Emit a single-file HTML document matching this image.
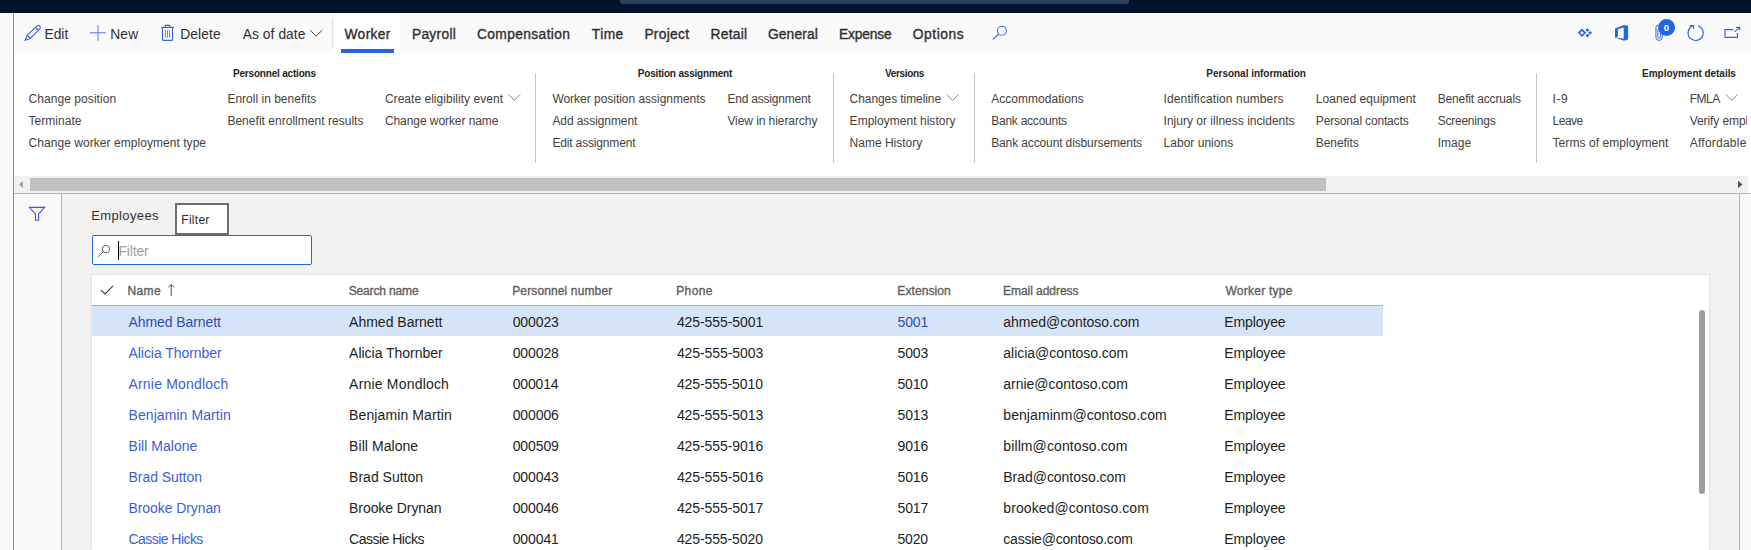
<!DOCTYPE html>
<html lang="en">
<head>
<meta charset="utf-8">
<title>Employees</title>
<style>
html,body{margin:0;padding:0}
body{width:1751px;height:550px;position:relative;overflow:hidden;background:#f3f2f1;font-family:"Liberation Sans",sans-serif}
.a{position:absolute}
.t{position:absolute;white-space:pre;line-height:20px;height:20px}
svg{position:absolute;overflow:visible}
</style>
</head>
<body>
<!-- top navigation bar -->
<div class="a" style="left:0;top:0;width:1751px;height:13px;background:#00142e"></div>
<div class="a" style="left:620px;top:0;width:509px;height:4px;background:#2b3f5f;border-radius:0 0 3px 3px"></div>
<!-- left strip -->
<div class="a" style="left:0;top:13px;width:13px;height:537px;background:#f8f8f8"></div>
<div class="a" style="left:13px;top:13px;width:1px;height:537px;background:#8f8f8f"></div>
<!-- action bar -->
<div class="a" style="left:14px;top:13px;width:1737px;height:40px;background:#fafafa"></div>
<div class="a" style="left:334px;top:13px;width:66px;height:40px;background:#ffffff"></div>
<div class="a" style="left:332px;top:18px;width:1px;height:30px;background:#e1dfdd"></div>
<div class="a" style="left:341px;top:49px;width:53px;height:4px;background:#2266e3"></div>
<!-- ribbon -->
<div class="a" style="left:14px;top:53px;width:1737px;height:123px;background:#ffffff"></div>
<div class="a" style="left:535px;top:73px;width:1px;height:90px;background:#c8c6c4"></div>
<div class="a" style="left:833px;top:73px;width:1px;height:90px;background:#c8c6c4"></div>
<div class="a" style="left:974px;top:73px;width:1px;height:90px;background:#c8c6c4"></div>
<div class="a" style="left:1536px;top:73px;width:1px;height:90px;background:#c8c6c4"></div>
<!-- horizontal scrollbar -->
<div class="a" style="left:14px;top:176px;width:1734px;height:17px;background:#f1f1f1"></div>
<div class="a" style="left:1748px;top:176px;width:3px;height:17px;background:#ffffff"></div>
<div class="a" style="left:30px;top:178px;width:1296px;height:13px;background:#c1c1c1"></div>
<svg style="left:14px;top:176px" width="1737" height="17" viewBox="14 176 1737 17"><path d="M23 181 L23 188 L19 184.5Z" fill="#a3a3a3"/><path d="M1738 180.8 L1738 188.2 L1742.4 184.5Z" fill="#505050"/></svg>
<div class="a" style="left:14px;top:193px;width:1737px;height:1px;background:#b9b9b9"></div>
<!-- left filter pane -->
<div class="a" style="left:14px;top:194px;width:47px;height:356px;background:#faf9f8"></div>
<div class="a" style="left:61px;top:194px;width:1px;height:356px;background:#b3b3b3"></div>
<!-- right pane -->
<div class="a" style="left:1739px;top:194px;width:1px;height:356px;background:#b3b3b3"></div>
<div class="a" style="left:1740px;top:194px;width:11px;height:356px;background:#faf9f8"></div>
<!-- tooltip -->
<div class="a" style="left:175px;top:203px;width:50px;height:28px;background:#fff;border:2px solid #6e6e6e"></div>
<!-- filter input -->
<div class="a" style="left:92px;top:235px;width:218px;height:28px;background:#fff;border:1px solid #2266e3;border-radius:2px"></div>
<div class="a" style="left:118px;top:241px;width:1px;height:19px;background:#000"></div>
<!-- grid -->
<div class="a" style="left:92px;top:275px;width:1617px;height:275px;background:#fff;box-shadow:0 0 3px rgba(0,0,0,0.13)"></div>
<div class="a" style="left:92px;top:305px;width:1291px;height:1px;background:#aeaeae"></div>
<div class="a" style="left:92px;top:306px;width:1291px;height:30px;background:#d6e4f8"></div>
<div class="a" style="left:1699px;top:310px;width:6px;height:184px;background:#9e9e9e;border-radius:3px"></div>
<svg style="left:0;top:0" width="1751" height="550" viewBox="0 0 1751 550" fill="none" stroke-linecap="butt">
<!-- edit pencil -->
<g stroke="#2c62e6" stroke-width="1.1" fill="none">
<path d="M25.2 40.3 L27.2 35.2 L37.0 25.9 Q38.4 24.8 39.8 26.2 Q41.0 27.6 39.8 29.0 L30.4 38.4 Z"/>
<path d="M27.2 35.2 L30.4 38.4"/>
<path d="M35.6 27.3 L38.6 30.3"/>
</g>
<!-- plus -->
<path d="M90 32.8 H106 M98 25 V41" stroke="#5677e6" stroke-width="1"/>
<!-- trash -->
<g stroke="#2c62e6" stroke-width="1.1">
<path d="M161 27.4 H174"/>
<path d="M165.3 27.4 V25.4 H169.8 V27.4"/>
<path d="M162.5 27.4 V39.4 Q162.5 40.4 163.5 40.4 H171.5 Q172.5 40.4 172.5 39.4 V27.4"/>
<path d="M165.5 30 V37.8 M167.5 30 V37.8 M169.5 30 V37.8" stroke="#5677e6" stroke-width="0.9"/>
</g>
<!-- chevrons -->
<g stroke="#4a4846" stroke-width="1">
<path d="M310.4 30.3 L316.2 36.2 L322 30.3"/>
</g>
<g stroke="#8a8886" stroke-width="1">
<path d="M508.6 94.6 L514.4 100.4 L520.2 94.6"/>
<path d="M946.8 94.6 L952.6 100.4 L958.4 94.6"/>
<path d="M1726 94.6 L1731.8 100.4 L1737.6 94.6"/>
</g>
<!-- search (action bar) -->
<g stroke="#3a66e6" stroke-width="1.1">
<circle cx="1001.9" cy="30.7" r="4.5"/>
<path d="M998.6 34.0 L992.8 39.7"/>
</g>
<!-- powerapps -->
<g fill="#2266e3" stroke="none">
<path fill-rule="evenodd" d="M1582 28.6 L1586.2 32.85 L1582 37.1 L1577.8 32.85 Z M1582 30.95 L1580.1 32.85 L1582 34.75 L1583.9 32.85 Z"/>
<path d="M1587.4 28.2 L1589.3 30.1 L1587.4 32 L1585.5 30.1 Z"/>
<path d="M1590 30.95 L1591.9 32.85 L1590 34.75 L1588.1 32.85 Z"/>
<path d="M1587.4 33.7 L1589.3 35.6 L1587.4 37.5 L1585.5 35.6 Z"/>
</g>
<!-- office -->
<path fill="#2266e3" fill-rule="evenodd" stroke="none" d="M1615 28.4 L1624 24.9 L1628.1 26.1 V39.6 L1624 40.8 L1615 37.5 Z M1617.9 29.2 L1623.7 27.5 V38.8 L1616 37.6 L1617.9 36.5 Z"/>
<!-- paperclip -->
<g stroke="#3a66e6" stroke-width="1">
<path d="M1662.3 30 V37.2 Q1662.3 40.4 1659.1 40.4 Q1655.9 40.4 1655.9 37.2 V27.6 Q1655.9 25.4 1658 25.4 Q1660.4 25.4 1660.4 27.6 V36.8 Q1660.4 38.2 1659.1 38.2 Q1657.8 38.2 1657.8 36.8 V29"/>
</g>
<circle cx="1666.6" cy="27.4" r="8.5" fill="#2266e3"/>
<!-- refresh -->
<g stroke="#2c62e6" stroke-width="1.1">
<path d="M1698.2 25.7 A7.6 7.6 0 1 1 1692.4 26"/>
<path d="M1689.4 25.6 H1693.6 V29"/>
</g>
<!-- popout -->
<g stroke="#2c62e6" stroke-width="1.1">
<path d="M1733.4 29.6 H1725 V37.4 H1737.4 V33"/>
<path d="M1734.6 31.9 L1739.4 27.4"/>
<path d="M1736.2 27.4 H1739.7 V30.2"/>
</g>
<!-- funnel -->
<path d="M29.4 207.4 H44.6 L38.6 214.2 V220.3 H35.5 V214.2 Z" stroke="#3a55e0" stroke-width="1.1" stroke-linejoin="miter"/>
<!-- search (filter input) -->
<g stroke="#605e5c" stroke-width="1">
<circle cx="105.9" cy="249.1" r="3.7"/>
<path d="M103.2 251.8 L98.1 256.8"/>
</g>
<!-- check -->
<path d="M101 290.2 L105.1 294 L113 285.9" stroke="#3b3a39" stroke-width="1.1"/>
<!-- sort arrow -->
<path d="M171.2 296 V284.6 M168.3 287.4 L171.2 284.4 L174.1 287.4" stroke="#55534f" stroke-width="1"/>
</svg>
<span class="t" style="left:1661.5px;top:17.8px;width:10px;text-align:center;font-size:9.5px;font-weight:700;color:#fff">0</span>

<span class="t" style="left:44.38px;top:25px;font-size:13.8px;letter-spacing:0.048px;color:#2f2f2f">Edit</span>
<span class="t" style="left:110.17px;top:25px;font-size:13.8px;letter-spacing:0.208px;color:#2f2f2f">New</span>
<span class="t" style="left:180.28px;top:25px;font-size:13.8px;letter-spacing:0.102px;color:#2f2f2f">Delete</span>
<span class="t" style="left:242.70px;top:25px;font-size:13.8px;letter-spacing:0.070px;color:#2f2f2f">As of date</span>
<span class="t" style="left:344.50px;top:25px;font-size:13.8px;letter-spacing:0.341px;color:#2f2f2f;-webkit-text-stroke:0.35px">Worker</span>
<span class="t" style="left:411.88px;top:25px;font-size:13.8px;letter-spacing:0.306px;color:#2f2f2f;-webkit-text-stroke:0.35px">Payroll</span>
<span class="t" style="left:476.93px;top:25px;font-size:13.8px;letter-spacing:0.373px;color:#2f2f2f;-webkit-text-stroke:0.35px">Compensation</span>
<span class="t" style="left:591.77px;top:25px;font-size:13.8px;letter-spacing:0.448px;color:#2f2f2f;-webkit-text-stroke:0.35px">Time</span>
<span class="t" style="left:644.38px;top:25px;font-size:13.8px;letter-spacing:0.279px;color:#2f2f2f;-webkit-text-stroke:0.35px">Project</span>
<span class="t" style="left:710.48px;top:25px;font-size:13.8px;letter-spacing:0.269px;color:#2f2f2f;-webkit-text-stroke:0.35px">Retail</span>
<span class="t" style="left:767.93px;top:25px;font-size:13.8px;letter-spacing:0.147px;color:#2f2f2f;-webkit-text-stroke:0.35px">General</span>
<span class="t" style="left:838.98px;top:25px;font-size:13.8px;letter-spacing:-0.151px;color:#2f2f2f;-webkit-text-stroke:0.35px">Expense</span>
<span class="t" style="left:912.83px;top:25px;font-size:13.8px;letter-spacing:0.544px;color:#2f2f2f;-webkit-text-stroke:0.35px">Options</span>
<span class="t" style="left:233.02px;top:64px;font-size:10px;letter-spacing:-0.195px;color:#252423;font-weight:700">Personnel actions</span>
<span class="t" style="left:637.83px;top:64px;font-size:10px;letter-spacing:-0.185px;color:#252423;font-weight:700">Position assignment</span>
<span class="t" style="left:884.98px;top:64px;font-size:10px;letter-spacing:-0.333px;color:#252423;font-weight:700">Versions</span>
<span class="t" style="left:1206.33px;top:64px;font-size:10px;letter-spacing:-0.019px;color:#252423;font-weight:700">Personal information</span>
<span class="t" style="left:1642.12px;top:64px;font-size:10px;letter-spacing:-0.038px;color:#252423;font-weight:700">Employment details</span>
<span class="t" style="left:28.52px;top:89px;font-size:12px;letter-spacing:0.065px;color:#444240">Change position</span>
<span class="t" style="left:28.52px;top:111px;font-size:12px;letter-spacing:0.030px;color:#444240">Terminate</span>
<span class="t" style="left:28.52px;top:133px;font-size:12px;letter-spacing:0.051px;color:#444240">Change worker employment type</span>
<span class="t" style="left:227.40px;top:89px;font-size:12px;letter-spacing:0.008px;color:#444240">Enroll in benefits</span>
<span class="t" style="left:227.40px;top:111px;font-size:12px;letter-spacing:0.026px;color:#444240">Benefit enrollment results</span>
<span class="t" style="left:384.93px;top:89px;font-size:12px;letter-spacing:0.029px;color:#444240">Create eligibility event</span>
<span class="t" style="left:384.93px;top:111px;font-size:12px;letter-spacing:-0.071px;color:#444240">Change worker name</span>
<span class="t" style="left:552.40px;top:89px;font-size:12px;letter-spacing:-0.027px;color:#444240">Worker position assignments</span>
<span class="t" style="left:552.40px;top:111px;font-size:12px;letter-spacing:-0.082px;color:#444240">Add assignment</span>
<span class="t" style="left:552.40px;top:133px;font-size:12px;letter-spacing:-0.156px;color:#444240">Edit assignment</span>
<span class="t" style="left:727.40px;top:89px;font-size:12px;letter-spacing:-0.205px;color:#444240">End assignment</span>
<span class="t" style="left:727.40px;top:111px;font-size:12px;letter-spacing:-0.072px;color:#444240">View in hierarchy</span>
<span class="t" style="left:849.62px;top:89px;font-size:12px;letter-spacing:-0.080px;color:#444240">Changes timeline</span>
<span class="t" style="left:849.62px;top:111px;font-size:12px;letter-spacing:0.029px;color:#444240">Employment history</span>
<span class="t" style="left:849.62px;top:133px;font-size:12px;letter-spacing:-0.010px;color:#444240">Name History</span>
<span class="t" style="left:991.20px;top:89px;font-size:12px;letter-spacing:0.039px;color:#444240">Accommodations</span>
<span class="t" style="left:991.20px;top:111px;font-size:12px;letter-spacing:-0.239px;color:#444240">Bank accounts</span>
<span class="t" style="left:991.20px;top:133px;font-size:12px;letter-spacing:-0.126px;color:#444240">Bank account disbursements</span>
<span class="t" style="left:1163.57px;top:89px;font-size:12px;letter-spacing:0.122px;color:#444240">Identification numbers</span>
<span class="t" style="left:1163.57px;top:111px;font-size:12px;letter-spacing:0.013px;color:#444240">Injury or illness incidents</span>
<span class="t" style="left:1163.57px;top:133px;font-size:12px;letter-spacing:0.017px;color:#444240">Labor unions</span>
<span class="t" style="left:1315.80px;top:89px;font-size:12px;letter-spacing:0.045px;color:#444240">Loaned equipment</span>
<span class="t" style="left:1315.80px;top:111px;font-size:12px;letter-spacing:-0.159px;color:#444240">Personal contacts</span>
<span class="t" style="left:1315.80px;top:133px;font-size:12px;letter-spacing:-0.073px;color:#444240">Benefits</span>
<span class="t" style="left:1437.70px;top:89px;font-size:12px;letter-spacing:-0.143px;color:#444240">Benefit accruals</span>
<span class="t" style="left:1437.70px;top:111px;font-size:12px;letter-spacing:-0.233px;color:#444240">Screenings</span>
<span class="t" style="left:1437.70px;top:133px;font-size:12px;letter-spacing:0.048px;color:#444240">Image</span>
<span class="t" style="left:1552.57px;top:89px;font-size:12px;letter-spacing:0.580px;color:#444240">I-9</span>
<span class="t" style="left:1552.57px;top:111px;font-size:12px;letter-spacing:-0.507px;color:#444240">Leave</span>
<span class="t" style="left:1552.57px;top:133px;font-size:12px;letter-spacing:0.057px;color:#444240">Terms of employment</span>
<span class="t" style="left:1689.80px;top:89px;font-size:12px;letter-spacing:-0.505px;color:#444240">FMLA</span>
<span class="t" style="left:1689.80px;top:111px;font-size:12px;letter-spacing:-0.095px;color:#444240;width:57.5px;overflow:hidden">Verify employment</span>
<span class="t" style="left:1689.80px;top:133px;font-size:12px;letter-spacing:0.228px;color:#444240;width:57.5px;overflow:hidden">Affordable Care Act</span>
<span class="t" style="left:91.17px;top:206px;font-size:13px;letter-spacing:0.383px;color:#323130">Employees</span>
<span class="t" style="left:181.30px;top:210px;font-size:12px;letter-spacing:0.271px;color:#2b2b2b">Filter</span>
<span class="t" style="left:118.38px;top:241px;font-size:14px;letter-spacing:-0.155px;color:#a19f9d">Filter</span>
<span class="t" style="left:127.60px;top:281px;font-size:12px;letter-spacing:0.345px;color:#605e5c;-webkit-text-stroke:0.35px">Name</span>
<span class="t" style="left:348.63px;top:281px;font-size:12px;letter-spacing:-0.135px;color:#605e5c;-webkit-text-stroke:0.35px">Search name</span>
<span class="t" style="left:512.20px;top:281px;font-size:12px;letter-spacing:0.131px;color:#605e5c;-webkit-text-stroke:0.35px">Personnel number</span>
<span class="t" style="left:676.20px;top:281px;font-size:12px;letter-spacing:0.387px;color:#605e5c;-webkit-text-stroke:0.35px">Phone</span>
<span class="t" style="left:897.30px;top:281px;font-size:12px;letter-spacing:0.084px;color:#605e5c;-webkit-text-stroke:0.35px">Extension</span>
<span class="t" style="left:1003.10px;top:281px;font-size:12px;letter-spacing:-0.057px;color:#605e5c;-webkit-text-stroke:0.35px">Email address</span>
<span class="t" style="left:1225.40px;top:281px;font-size:12px;letter-spacing:0.258px;color:#605e5c;-webkit-text-stroke:0.35px">Worker type</span>
<span class="t" style="left:128.50px;top:312px;font-size:14px;letter-spacing:-0.074px;color:#2e4fb0">Ahmed Barnett</span>
<span class="t" style="left:349.10px;top:312px;font-size:14px;letter-spacing:-0.005px;color:#201f1e">Ahmed Barnett</span>
<span class="t" style="left:512.65px;top:312px;font-size:14px;letter-spacing:-0.099px;color:#201f1e">000023</span>
<span class="t" style="left:676.88px;top:312px;font-size:14px;letter-spacing:-0.081px;color:#201f1e">425-555-5001</span>
<span class="t" style="left:897.53px;top:312px;font-size:14px;letter-spacing:-0.135px;color:#2e4fb0">5001</span>
<span class="t" style="left:1003.32px;top:312px;font-size:14px;letter-spacing:-0.020px;color:#201f1e">ahmed@contoso.com</span>
<span class="t" style="left:1224.28px;top:312px;font-size:14px;letter-spacing:-0.124px;color:#201f1e">Employee</span>
<span class="t" style="left:128.50px;top:343px;font-size:14px;letter-spacing:-0.056px;color:#3a5fd6">Alicia Thornber</span>
<span class="t" style="left:349.10px;top:343px;font-size:14px;letter-spacing:-0.020px;color:#201f1e">Alicia Thornber</span>
<span class="t" style="left:512.65px;top:343px;font-size:14px;letter-spacing:-0.099px;color:#201f1e">000028</span>
<span class="t" style="left:676.88px;top:343px;font-size:14px;letter-spacing:-0.081px;color:#201f1e">425-555-5003</span>
<span class="t" style="left:897.53px;top:343px;font-size:14px;letter-spacing:-0.135px;color:#201f1e">5003</span>
<span class="t" style="left:1003.32px;top:343px;font-size:14px;letter-spacing:-0.037px;color:#201f1e">alicia@contoso.com</span>
<span class="t" style="left:1224.28px;top:343px;font-size:14px;letter-spacing:-0.124px;color:#201f1e">Employee</span>
<span class="t" style="left:128.50px;top:374px;font-size:14px;letter-spacing:0.186px;color:#3a5fd6">Arnie Mondloch</span>
<span class="t" style="left:349.10px;top:374px;font-size:14px;letter-spacing:0.194px;color:#201f1e">Arnie Mondloch</span>
<span class="t" style="left:512.65px;top:374px;font-size:14px;letter-spacing:-0.144px;color:#201f1e">000014</span>
<span class="t" style="left:676.88px;top:374px;font-size:14px;letter-spacing:-0.101px;color:#201f1e">425-555-5010</span>
<span class="t" style="left:897.53px;top:374px;font-size:14px;letter-spacing:-0.210px;color:#201f1e">5010</span>
<span class="t" style="left:1003.32px;top:374px;font-size:14px;letter-spacing:-0.015px;color:#201f1e">arnie@contoso.com</span>
<span class="t" style="left:1224.28px;top:374px;font-size:14px;letter-spacing:-0.124px;color:#201f1e">Employee</span>
<span class="t" style="left:128.50px;top:405px;font-size:14px;letter-spacing:0.075px;color:#3a5fd6">Benjamin Martin</span>
<span class="t" style="left:349.10px;top:405px;font-size:14px;letter-spacing:0.110px;color:#201f1e">Benjamin Martin</span>
<span class="t" style="left:512.65px;top:405px;font-size:14px;letter-spacing:-0.099px;color:#201f1e">000006</span>
<span class="t" style="left:676.88px;top:405px;font-size:14px;letter-spacing:-0.081px;color:#201f1e">425-555-5013</span>
<span class="t" style="left:897.53px;top:405px;font-size:14px;letter-spacing:-0.135px;color:#201f1e">5013</span>
<span class="t" style="left:1003.32px;top:405px;font-size:14px;letter-spacing:0.066px;color:#201f1e">benjaminm@contoso.com</span>
<span class="t" style="left:1224.28px;top:405px;font-size:14px;letter-spacing:-0.124px;color:#201f1e">Employee</span>
<span class="t" style="left:128.50px;top:436px;font-size:14px;letter-spacing:0.039px;color:#3a5fd6">Bill Malone</span>
<span class="t" style="left:349.10px;top:436px;font-size:14px;letter-spacing:0.059px;color:#201f1e">Bill Malone</span>
<span class="t" style="left:512.65px;top:436px;font-size:14px;letter-spacing:-0.099px;color:#201f1e">000509</span>
<span class="t" style="left:676.88px;top:436px;font-size:14px;letter-spacing:-0.081px;color:#201f1e">425-555-9016</span>
<span class="t" style="left:897.53px;top:436px;font-size:14px;letter-spacing:-0.135px;color:#201f1e">9016</span>
<span class="t" style="left:1003.32px;top:436px;font-size:14px;letter-spacing:0.106px;color:#201f1e">billm@contoso.com</span>
<span class="t" style="left:1224.28px;top:436px;font-size:14px;letter-spacing:-0.124px;color:#201f1e">Employee</span>
<span class="t" style="left:128.50px;top:467px;font-size:14px;letter-spacing:-0.044px;color:#3a5fd6">Brad Sutton</span>
<span class="t" style="left:349.10px;top:467px;font-size:14px;letter-spacing:0.006px;color:#201f1e">Brad Sutton</span>
<span class="t" style="left:512.65px;top:467px;font-size:14px;letter-spacing:-0.099px;color:#201f1e">000043</span>
<span class="t" style="left:676.88px;top:467px;font-size:14px;letter-spacing:-0.081px;color:#201f1e">425-555-5016</span>
<span class="t" style="left:897.53px;top:467px;font-size:14px;letter-spacing:-0.135px;color:#201f1e">5016</span>
<span class="t" style="left:1003.32px;top:467px;font-size:14px;letter-spacing:-0.039px;color:#201f1e">Brad@contoso.com</span>
<span class="t" style="left:1224.28px;top:467px;font-size:14px;letter-spacing:-0.124px;color:#201f1e">Employee</span>
<span class="t" style="left:128.50px;top:498px;font-size:14px;letter-spacing:-0.083px;color:#3a5fd6">Brooke Drynan</span>
<span class="t" style="left:349.10px;top:498px;font-size:14px;letter-spacing:-0.074px;color:#201f1e">Brooke Drynan</span>
<span class="t" style="left:512.65px;top:498px;font-size:14px;letter-spacing:-0.099px;color:#201f1e">000046</span>
<span class="t" style="left:676.88px;top:498px;font-size:14px;letter-spacing:-0.081px;color:#201f1e">425-555-5017</span>
<span class="t" style="left:897.53px;top:498px;font-size:14px;letter-spacing:-0.135px;color:#201f1e">5017</span>
<span class="t" style="left:1003.32px;top:498px;font-size:14px;letter-spacing:0.077px;color:#201f1e">brooked@contoso.com</span>
<span class="t" style="left:1224.28px;top:498px;font-size:14px;letter-spacing:-0.124px;color:#201f1e">Employee</span>
<span class="t" style="left:128.50px;top:529px;font-size:14px;letter-spacing:-0.551px;color:#3a5fd6">Cassie Hicks</span>
<span class="t" style="left:349.10px;top:529px;font-size:14px;letter-spacing:-0.505px;color:#201f1e">Cassie Hicks</span>
<span class="t" style="left:512.65px;top:529px;font-size:14px;letter-spacing:-0.099px;color:#201f1e">000041</span>
<span class="t" style="left:676.88px;top:529px;font-size:14px;letter-spacing:-0.101px;color:#201f1e">425-555-5020</span>
<span class="t" style="left:897.53px;top:529px;font-size:14px;letter-spacing:-0.210px;color:#201f1e">5020</span>
<span class="t" style="left:1003.32px;top:529px;font-size:14px;letter-spacing:-0.218px;color:#201f1e">cassie@contoso.com</span>
<span class="t" style="left:1224.28px;top:529px;font-size:14px;letter-spacing:-0.124px;color:#201f1e">Employee</span>
</body>
</html>
